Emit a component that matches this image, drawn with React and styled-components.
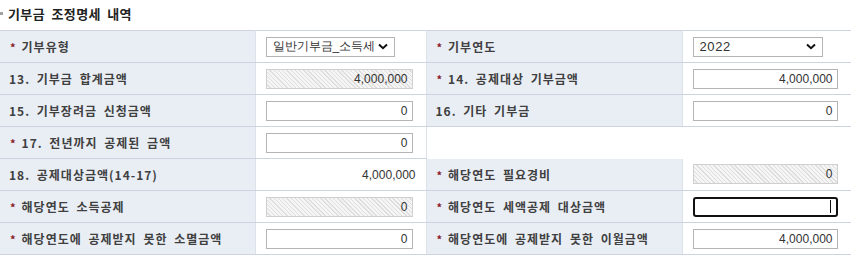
import React from 'react';
import styled, { createGlobalStyle } from 'styled-components';

const GlobalStyle = createGlobalStyle`
    body {
        margin: 0;
        background: #ffffff;
        font-family: "Noto Sans CJK KR", "Noto Sans", sans-serif;
    }
`;

const Page = styled.div`
    width: 851px;
`;

const Title = styled.h3`
    display: flex;
    align-items: center;
    gap: 5px;
    height: 30px;
    margin: 0;
    padding: 0 0 4px 0;
    box-sizing: border-box;
    font-size: 13px;
    font-weight: 700;
    letter-spacing: 0.4px;
    word-spacing: 3px;
    color: #222;

    &::before {
        content: '';
        width: 3px;
        height: 3px;
        background: #a0a0a0;
    }
`;

const Table = styled.table`
    width: 851px;
    border-collapse: collapse;
    table-layout: fixed;
    border-top: 1px solid #cdd4df;
`;

const Label = styled.th`
    height: 31px;
    padding: 0 0 0 ${(p) => (p.$required ? '10px' : '9px')};
    background: #e9eef5;
    border-bottom: 1px solid #cdd4df;
    border-right: 1px solid #dde2ea;
    text-align: left;
    font-size: 12px;
    font-weight: 700;
    letter-spacing: 1px;
    word-spacing: 3px;
    color: #404040;
    white-space: nowrap;
`;

const Star = styled.span`
    color: #8c1c2c;
    margin-right: 5px;
    font-size: 11px;
`;

const Cell = styled.td`
    height: 31px;
    padding: 0 ${(p) => (p.$plain ? '10px' : '0')} 0 10px;
    border-bottom: 1px solid #cdd4df;
    border-right: 1px solid #dde2ea;
    text-align: ${(p) => (p.$plain ? 'right' : 'left')};
    font-family: "Liberation Sans", sans-serif;
    font-size: 12px;
    color: #333;
`;

const Empty = styled.td`
    border: none;
`;

const Field = styled.div`
    display: flex;
    align-items: center;
    justify-content: flex-end;
    box-sizing: border-box;
    width: ${(p) => p.$w}px;
    height: 20px;
    padding: 0 4px;
    border: ${(p) => (p.$focused ? '2px solid #111' : '1px solid #b4b4b4')};
    border-radius: ${(p) => (p.$focused ? '3px' : '0')};
    background: ${(p) =>
        p.$locked
            ? 'repeating-linear-gradient(45deg, #f5f5f5 0 2px, #dedede 2px 3px)'
            : '#fff'};
    border-color: ${(p) => (p.$locked ? '#cfcfcf' : undefined)};
    font-family: "Liberation Sans", sans-serif;
    font-size: 12px;
    color: #333;
`;

const Caret = styled.span`
    width: 1px;
    height: 13px;
    background: #111;
    margin-right: 1px;
`;

const SelectBox = styled.div`
    display: flex;
    align-items: center;
    box-sizing: border-box;
    width: ${(p) => p.$w}px;
    height: 20px;
    padding: 0 6px 0 6px;
    border: 1px solid #b4b4b4;
    background: #fff;
    font-size: ${(p) => (p.$num ? '13px' : '12px')};
    letter-spacing: ${(p) => (p.$num ? '0.6px' : '0')};
    color: #333;
    white-space: nowrap;
    overflow: hidden;
`;

const SelectText = styled.span`
    flex: 1;
    overflow: hidden;
`;

const Chevron = () => (
    <svg width="10" height="7" viewBox="0 0 10 7" style={{ flexShrink: 0, marginLeft: 2 }}>
        <path d="M1 1.5 L5 5.2 L9 1.5" fill="none" stroke="#111" strokeWidth="2" />
    </svg>
);

const Req = ({ children }) => (
    <Label $required>
        <Star>*</Star>
        {children}
    </Label>
);

const App = () => {
    return (
        <Page>
            <GlobalStyle />
            <Title>기부금 조정명세 내역</Title>
            <Table>
                <colgroup>
                    <col style={{ width: 255 }} />
                    <col style={{ width: 171 }} />
                    <col style={{ width: 256 }} />
                    <col style={{ width: 169 }} />
                </colgroup>
                <tbody>
                    <tr>
                        <Req>기부유형</Req>
                        <Cell>
                            <SelectBox $w={129}>
                                <SelectText>일반기부금_소득세법</SelectText>
                                <Chevron />
                            </SelectBox>
                        </Cell>
                        <Req>기부연도</Req>
                        <Cell>
                            <SelectBox $w={130} $num>
                                <SelectText>2022</SelectText>
                                <Chevron />
                            </SelectBox>
                        </Cell>
                    </tr>
                    <tr>
                        <Label>13. 기부금 합계금액</Label>
                        <Cell>
                            <Field $w={147} $locked>4,000,000</Field>
                        </Cell>
                        <Req>14. 공제대상 기부금액</Req>
                        <Cell>
                            <Field $w={145}>4,000,000</Field>
                        </Cell>
                    </tr>
                    <tr>
                        <Label>15. 기부장려금 신청금액</Label>
                        <Cell>
                            <Field $w={147}>0</Field>
                        </Cell>
                        <Label>16. 기타 기부금</Label>
                        <Cell>
                            <Field $w={145}>0</Field>
                        </Cell>
                    </tr>
                    <tr>
                        <Req>17. 전년까지 공제된 금액</Req>
                        <Cell>
                            <Field $w={147}>0</Field>
                        </Cell>
                        <Empty colSpan={2} />
                    </tr>
                    <tr>
                        <Label>18. 공제대상금액(14-17)</Label>
                        <Cell $plain>4,000,000</Cell>
                        <Req>해당연도 필요경비</Req>
                        <Cell>
                            <Field $w={145} $locked>0</Field>
                        </Cell>
                    </tr>
                    <tr>
                        <Req>해당연도 소득공제</Req>
                        <Cell>
                            <Field $w={147} $locked>0</Field>
                        </Cell>
                        <Req>해당연도 세액공제 대상금액</Req>
                        <Cell>
                            <Field $w={145} $focused>
                                <Caret />
                            </Field>
                        </Cell>
                    </tr>
                    <tr>
                        <Req>해당연도에 공제받지 못한 소멸금액</Req>
                        <Cell>
                            <Field $w={147}>0</Field>
                        </Cell>
                        <Req>해당연도에 공제받지 못한 이월금액</Req>
                        <Cell>
                            <Field $w={145}>4,000,000</Field>
                        </Cell>
                    </tr>
                </tbody>
            </Table>
        </Page>
    );
};

export default App;
